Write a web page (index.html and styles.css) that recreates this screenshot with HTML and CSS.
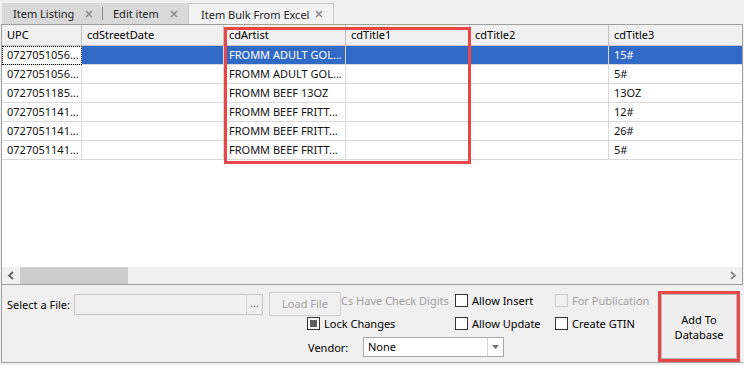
FILE: index.html
```html
<!DOCTYPE html>
<html lang="en">
<head>
    <meta charset="UTF-8">
    <meta name="viewport" content="width=device-width, initial-scale=1.0">
    <title>Item Bulk From Excel</title>
    <link rel="stylesheet" href="styles.css">
</head>
<body>
    <div class="tabs">
        <div class="tab-group">
            <div class="tab tab-listing">Item Listing
                <svg class="close" viewBox="0 0 8 8"><path d="M1 1L7 7M7 1L1 7"/></svg>
            </div>
            <div class="tab-sep"></div>
            <div class="tab tab-edit">Edit item
                <svg class="close" viewBox="0 0 8 8"><path d="M1 1L7 7M7 1L1 7"/></svg>
            </div>
        </div>
        <div class="tab active">Item Bulk From Excel
            <svg class="close" viewBox="0 0 8 8"><path d="M1 1L7 7M7 1L1 7"/></svg>
        </div>
    </div>

    <div class="grid">
        <div class="rows">
            <div class="row head">
                <div class="cell">UPC</div>
                <div class="cell">cdStreetDate</div>
                <div class="cell">cdArtist</div>
                <div class="cell">cdTitle1</div>
                <div class="cell">cdTitle2</div>
                <div class="cell">cdTitle3</div>
            </div>
            <div class="row selected">
                <div class="cell focus">0727051056...</div>
                <div class="cell"></div>
                <div class="cell">FROMM ADULT GOL...</div>
                <div class="cell"></div>
                <div class="cell"></div>
                <div class="cell">15#</div>
            </div>
            <div class="row">
                <div class="cell">0727051056...</div>
                <div class="cell"></div>
                <div class="cell">FROMM ADULT GOL...</div>
                <div class="cell"></div>
                <div class="cell"></div>
                <div class="cell">5#</div>
            </div>
            <div class="row">
                <div class="cell">0727051185...</div>
                <div class="cell"></div>
                <div class="cell">FROMM BEEF 13OZ</div>
                <div class="cell"></div>
                <div class="cell"></div>
                <div class="cell">13OZ</div>
            </div>
            <div class="row">
                <div class="cell">0727051141...</div>
                <div class="cell"></div>
                <div class="cell">FROMM BEEF FRITT...</div>
                <div class="cell"></div>
                <div class="cell"></div>
                <div class="cell">12#</div>
            </div>
            <div class="row">
                <div class="cell">0727051141...</div>
                <div class="cell"></div>
                <div class="cell">FROMM BEEF FRITT...</div>
                <div class="cell"></div>
                <div class="cell"></div>
                <div class="cell">26#</div>
            </div>
            <div class="row">
                <div class="cell">0727051141...</div>
                <div class="cell"></div>
                <div class="cell">FROMM BEEF FRITT...</div>
                <div class="cell"></div>
                <div class="cell"></div>
                <div class="cell">5#</div>
            </div>
        </div>

        <div class="highlight"></div>

        <div class="hscroll">
            <div class="arrow">
                <svg width="8" height="9" viewBox="0 0 8 9"><path d="M6 1L2 4.5L6 8"/></svg>
            </div>
            <div class="track"><div class="thumb"></div></div>
            <div class="arrow arrow-right">
                <svg width="8" height="9" viewBox="0 0 8 9"><path d="M2 1L6 4.5L2 8"/></svg>
            </div>
        </div>
    </div>

    <div class="panel">
        <div class="controls">
            <div class="label">Select a File:</div>
            <div class="file">
                <div class="file-input"></div>
                <div class="file-btn">...</div>
            </div>
            <div class="load-btn">Load File</div>
            <div class="check-digits">Cs Have Check Digits</div>
            <label class="check top"><span class="box"></span>Allow Insert</label>
            <label class="check top disabled"><span class="box"></span>For Publication</label>

            <label class="check lock"><span class="box checked"></span>Lock Changes</label>
            <label class="check col5"><span class="box"></span>Allow Update</label>
            <label class="check col6"><span class="box"></span>Create GTIN</label>

            <div class="vendor">
                <span class="vendor-label">Vendor:</span>
                <div class="select">
                    <span class="select-value">None</span>
                    <span class="select-arrow">
                        <svg width="7" height="4" viewBox="0 0 7 4"><path d="M0 0H7L3.5 4Z"/></svg>
                    </span>
                </div>
            </div>
        </div>

        <div class="add-wrap">
            <button class="add-btn">Add To<br>Database</button>
        </div>
    </div>
</body>
</html>
```

FILE: styles.css
```css
* {
    box-sizing: border-box;
}
body {
    margin: 0;
    width: 744px;
    height: 365px;
    overflow: hidden;
    background-color: #f0f0f0;
    font-family: "Noto Sans", "Open Sans", sans-serif;
    font-size: 11px;
    color: #000;
}

/* tab strip */
.tabs {
    display: flex;
    align-items: flex-end;
    height: 24px;
    padding: 3px 0 0 2px;
}
.tab-group {
    display: flex;
    align-items: center;
    background-color: #d9d9d9;
}
.tab {
    display: flex;
    align-items: center;
    justify-content: space-between;
    height: 21px;
    white-space: nowrap;
    color: #1e1e1e;
}
.tab-listing {
    width: 100px;
    padding: 0 9px 0 11px;
}
.tab-edit {
    width: 85px;
    padding: 0 10px 0 10px;
}
.tab-sep {
    width: 1px;
    height: 13px;
    background-color: #8a8a8a;
}
.tab.active {
    width: 146px;
    padding: 0 10px 0 12px;
    background-color: #f2f2f2;
    border: 1px solid #c9c9c9;
    border-bottom: none;
}
.close {
    width: 8px;
    height: 8px;
    fill: none;
    stroke: #8c8c8c;
    stroke-width: 1.6;
}

/* data grid */
.grid {
    position: relative;
    display: flex;
    flex-direction: column;
    width: 742px;
    height: 261px;
    margin-left: 1px;
    border: 1px solid #a0a0a0;
    background-color: #fff;
}
.rows {
    flex: 1;
    overflow: hidden;
}
.row {
    display: grid;
    grid-template-columns: 80px 142px 122px 124px 139px 1fr;
    height: 19px;
}
.row.head {
    height: 21px;
    background-color: #f0f0f0;
}
.cell {
    padding-left: 5px;
    border-right: 1px solid #d9d9d9;
    border-bottom: 1px solid #d9d9d9;
    line-height: 18px;
    white-space: nowrap;
    overflow: hidden;
    color: #111;
}
.head .cell {
    border-color: #c3c3c3;
    line-height: 20px;
    color: #000;
}
.cell:last-child {
    border-right: none;
}
.selected .cell {
    background-color: #3169c6;
    color: #fff;
}
.selected .cell.focus {
    background-color: #fff;
    color: #111;
    outline: 1px dotted #000;
    outline-offset: -1px;
}
.highlight {
    position: absolute;
    left: 222px;
    top: 2px;
    width: 247px;
    height: 137px;
    border: 3px solid #e8474a;
}

/* horizontal scrollbar */
.hscroll {
    display: flex;
    height: 17px;
    background-color: #f0f0f0;
}
.arrow {
    display: flex;
    align-items: center;
    justify-content: center;
    width: 18px;
}
.arrow path {
    fill: none;
    stroke: #606060;
    stroke-width: 1.8;
}
.arrow-right path {
    stroke: #8a8a8a;
}
.track {
    flex: 1;
}
.thumb {
    width: 108px;
    height: 100%;
    background-color: #cdcdcd;
}

/* bottom panel */
.panel {
    display: flex;
    width: 742px;
    height: 78px;
    margin-left: 1px;
    padding: 6px 3px 0 0;
    border-left: 1px solid #a0a0a0;
    border-bottom: 1px solid #a0a0a0;
}
.controls {
    flex: 1;
    display: grid;
    grid-template-columns: 67px 195px 72px 114px 100px 100px;
    grid-template-rows: 24px 15px 26px;
    align-content: start;
    padding: 1px 0 0 5px;
}
.label {
    align-self: center;
    white-space: nowrap;
}
.file {
    display: flex;
    width: 189px;
    height: 21px;
    align-self: center;
    border: 1px solid #c8c8c8;
    background-color: #f0f0f0;
}
.file-input {
    flex: 1;
}
.file-btn {
    width: 16px;
    border-left: 1px solid #d4d4d4;
    text-align: center;
    line-height: 15px;
    color: #6f6f6f;
}
.load-btn {
    height: 24px;
    border: 1px solid #cfcfcf;
    background-color: #f0f0f0;
    color: #a0a0a0;
    text-align: center;
    line-height: 22px;
}
.check-digits {
    align-self: start;
    margin-top: 1px;
    line-height: 15px;
    white-space: nowrap;
    color: #a0a0a0;
}
.check {
    display: flex;
    align-items: center;
    gap: 4px;
    white-space: nowrap;
}
.check.top {
    align-self: start;
    margin-top: 2px;
    height: 13px;
}
.check.disabled {
    color: #a0a0a0;
}
.box {
    flex: none;
    width: 13px;
    height: 13px;
    border: 1px solid #333;
    background-color: #fff;
}
.check.disabled .box {
    border-color: #cccccc;
    background-color: #f0f0f0;
}
.box.checked {
    padding: 2px;
}
.box.checked::after {
    content: "";
    display: block;
    width: 7px;
    height: 7px;
    background-color: #5f5f5f;
}
.lock {
    grid-column: 3 / 5;
    margin-left: 38px;
}
.col5 {
    grid-column: 5;
}
.col6 {
    grid-column: 6;
}
.vendor {
    grid-column: 3 / 7;
    align-self: end;
    display: flex;
    align-items: center;
    margin-left: 39px;
}
.vendor-label {
    width: 55px;
}
.select {
    display: flex;
    width: 141px;
    height: 20px;
    border: 1px solid #a9a9a9;
    background-color: #fff;
}
.select-value {
    flex: 1;
    padding-left: 4px;
    line-height: 18px;
}
.select-arrow {
    display: flex;
    align-items: center;
    justify-content: center;
    width: 16px;
    border-left: 1px solid #d4d4d4;
    fill: #707070;
}
.add-wrap {
    width: 82px;
    height: 71px;
    border: 3px solid #e8474a;
}
.add-btn {
    width: 100%;
    height: 100%;
    padding: 0;
    border: 1px solid #b9b9b9;
    background-color: #efefef;
    font-family: inherit;
    font-size: 11px;
    line-height: 15px;
    color: #000;
}
```
